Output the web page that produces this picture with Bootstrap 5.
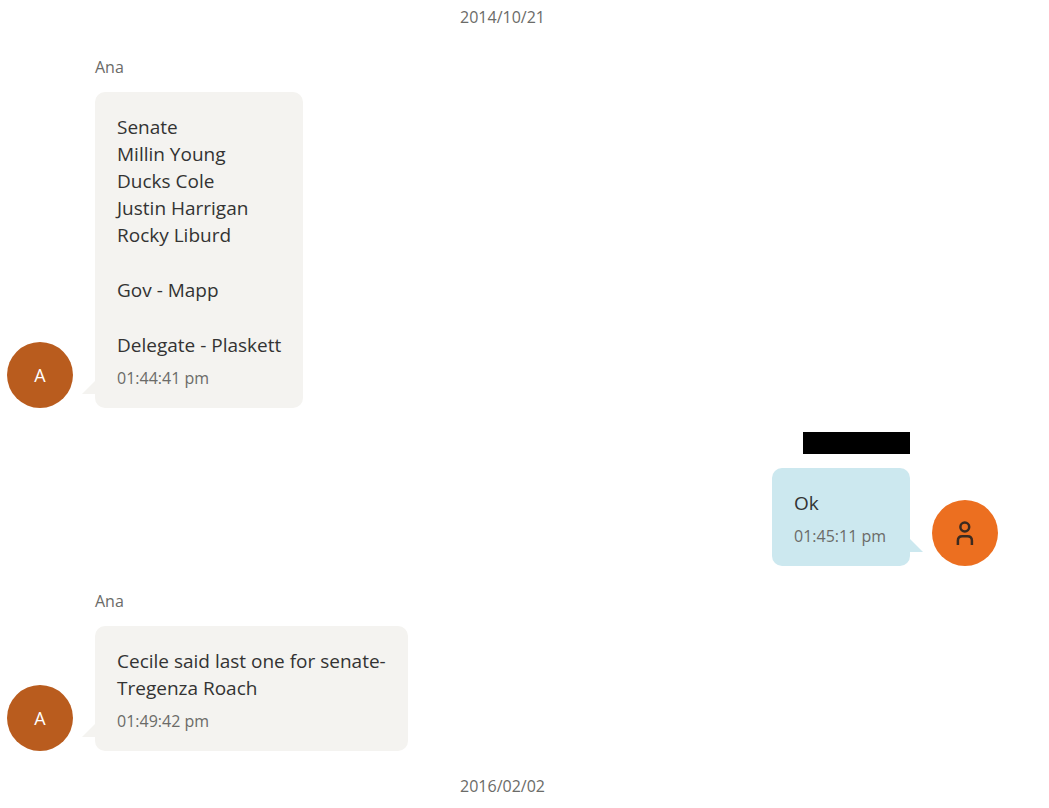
<!DOCTYPE html>
<html lang="en">
<head>
<meta charset="utf-8">
<meta name="viewport" content="width=device-width, initial-scale=1">
<title>Messages</title>
<link href="https://cdn.jsdelivr.net/npm/bootstrap@5.3.0/dist/css/bootstrap.min.css" rel="stylesheet">
<style>
body{font-family:"Open Sans","Noto Sans",sans-serif;font-size:19px;line-height:27px;color:#333;background:#fff}
.thread{padding:6px 51px 6px 7px;gap:24px}
.day,.sender,.stamp{font-size:16px;line-height:22px;color:#6b6b68}
.day-first{margin-bottom:4px}
.turn{gap:22px}
.sender{margin-bottom:14px}
.bubble{min-width:138px;padding:22px 22px 19px;border-radius:10px;background:#f4f3f0}
.bubble p{margin:0 0 28px}
.bubble p:last-of-type{margin-bottom:8px}
.mine .bubble{background:#cce8ef}
.tail{position:absolute;bottom:14px;right:100%;width:13px;height:13px;fill:#f4f3f0}
.mine .tail{right:auto;left:100%;fill:#cce8ef}
.avatar{width:66px;height:66px;font-size:18px;background:#b95c1e;color:#fff}
.mine .avatar{background:#ec6f20;color:#3b2a20}
.redacted{width:107px;height:22px;margin-bottom:14px}
</style>
</head>
<body>
<main class="thread d-flex flex-column">
  <div class="day day-first text-center">2014/10/21</div>

  <article class="turn d-flex align-items-end">
    <div class="avatar rounded-circle flex-shrink-0 d-flex align-items-center justify-content-center">A</div>
    <div class="d-flex flex-column align-items-start">
      <div class="sender">Ana</div>
      <div class="bubble position-relative">
        <p>Senate<br>Millin Young<br>Ducks Cole<br>Justin Harrigan<br>Rocky Liburd</p>
        <p>Gov - Mapp</p>
        <p>Delegate - Plaskett</p>
        <div class="stamp">01:44:41 pm</div>
        <svg class="tail" viewBox="0 0 13 13" aria-hidden="true"><path d="M13 0V13H0Z"/></svg>
      </div>
    </div>
  </article>

  <article class="turn mine d-flex align-items-end justify-content-end">
    <div class="d-flex flex-column align-items-end">
      <div class="redacted bg-black"></div>
      <div class="bubble position-relative">
        <p>Ok</p>
        <div class="stamp">01:45:11 pm</div>
        <svg class="tail" viewBox="0 0 13 13" aria-hidden="true"><path d="M0 0V13H13Z"/></svg>
      </div>
    </div>
    <div class="avatar rounded-circle flex-shrink-0 d-flex align-items-center justify-content-center">
      <svg width="24" height="26" viewBox="0 0 24 26" fill="none" stroke="currentColor" stroke-width="2.5" aria-hidden="true"><circle cx="11.8" cy="7" r="4.4"/><path d="M4.9 25V20.6Q4.9 16.2 9.3 16.2H14.5Q18.9 16.2 18.9 20.6V25"/></svg>
    </div>
  </article>

  <article class="turn d-flex align-items-end">
    <div class="avatar rounded-circle flex-shrink-0 d-flex align-items-center justify-content-center">A</div>
    <div class="d-flex flex-column align-items-start">
      <div class="sender">Ana</div>
      <div class="bubble position-relative">
        <p>Cecile said last one for senate-<br>Tregenza Roach</p>
        <div class="stamp">01:49:42 pm</div>
        <svg class="tail" viewBox="0 0 13 13" aria-hidden="true"><path d="M13 0V13H0Z"/></svg>
      </div>
    </div>
  </article>

  <div class="day text-center">2016/02/02</div>
</main>
<script src="https://cdn.jsdelivr.net/npm/bootstrap@5.3.0/dist/js/bootstrap.bundle.min.js"></script>
</body>
</html>
